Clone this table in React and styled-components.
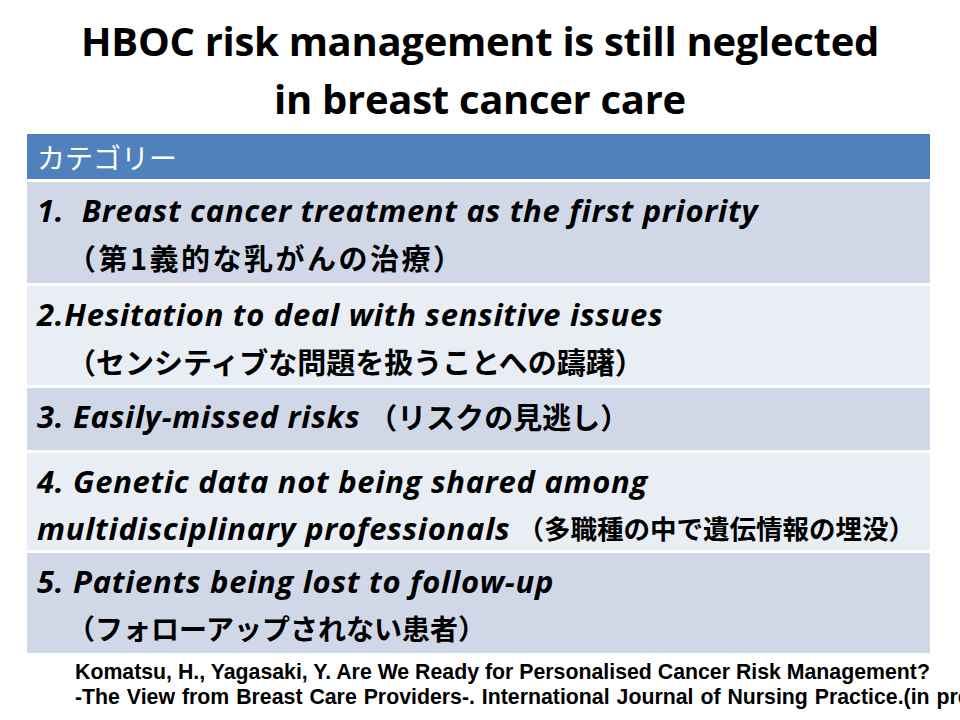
import React from "react";
import styled, { createGlobalStyle } from "styled-components";

const Global = createGlobalStyle`
  html, body { margin: 0; padding: 0; background: #ffffff; }
  body { width: 960px; height: 720px; overflow: hidden; }
`;

const Slide = styled.div`
  width: 960px;
  height: 720px;
  overflow: hidden;
  display: flex;
  flex-direction: column;
  background: #fff;
`;

const Title = styled.h1`
  margin: 0;
  padding-top: 12px;
  height: 121px;
  box-sizing: border-box;
  text-align: center;
  font-family: "Open Sans", "Noto Sans", sans-serif;
  font-weight: 700;
  font-size: 40px;
  line-height: 58px;
  letter-spacing: -0.3px;
  color: #000;
`;

const Table = styled.div`
  margin: 13px 0 0 27px;
  width: 903px;
  display: flex;
  flex-direction: column;
  gap: 3px;
`;

const Header = styled.div`
  height: 45px;
  background: #4f81bd;
  color: #fff;
  display: flex;
  align-items: center;
  padding-left: 10px;
  font-family: "Noto Sans CJK JP", sans-serif;
  font-size: 28px;
`;

const Row = styled.div`
  height: ${(p) => p.$h}px;
  box-sizing: border-box;
  padding: 4px 0 0 10px;
  background: ${(p) => (p.$odd ? "#d0d8e8" : "#e9edf4")};
`;

const Line = styled.div`
  height: 47px;
  display: flex;
  align-items: center;
  white-space: nowrap;
  padding-left: ${(p) => p.$indent || 0}px;
`;

const En = styled.span`
  font-family: "Open Sans", "Noto Sans", sans-serif;
  font-weight: 700;
  font-style: italic;
  font-size: 31px;
  letter-spacing: 0.7px;
  color: #000;
  white-space: pre;
`;

const Jp = styled.span`
  font-family: "Noto Sans CJK JP", sans-serif;
  font-weight: 700;
  font-size: ${(p) => p.$size || 29}px;
  color: #000;
  letter-spacing: ${(p) => p.$ls || 0}px;
  margin-left: ${(p) => p.$ml || 0}px;
`;

const Citation = styled.div`
  margin-top: 7px;
  padding-left: 75px;
  font-family: "Liberation Sans", Arial, sans-serif;
  font-weight: 700;
  font-size: 21.3px;
  line-height: 25px;
  color: #000;
  white-space: nowrap;
`;

const CiteLine = styled.div`
  word-spacing: ${(p) => p.$ws || 0}px;
`;

export default function App() {
  return (
    <>
      <Global />
      <Slide>
        <Title>
          HBOC risk management is still neglected
          <br />
          in breast cancer care
        </Title>
        <Table>
          <Header>カテゴリー</Header>
          <Row $odd $h={101}>
            <Line>
              <En>{"1.  Breast cancer treatment as the first priority"}</En>
            </Line>
            <Line $indent={30}>
              <Jp $ls={2.5}>（第1義的な乳がんの治療）</Jp>
            </Line>
          </Row>
          <Row $h={99}>
            <Line>
              <En>2.Hesitation to deal with sensitive issues</En>
            </Line>
            <Line $indent={30}>
              <Jp>（センシティブな問題を扱うことへの躊躇）</Jp>
            </Line>
          </Row>
          <Row $odd $h={62}>
            <Line>
              <En>3. Easily-missed risks</En>
              <Jp $ml={8}>（リスクの見逃し）</Jp>
            </Line>
          </Row>
          <Row $h={97}>
            <Line>
              <En>4. Genetic data not being shared among</En>
            </Line>
            <Line>
              <En>multidisciplinary professionals</En>
              <Jp $size={26.5} $ml={7}>（多職種の中で遺伝情報の埋没）</Jp>
            </Line>
          </Row>
          <Row $odd $h={100}>
            <Line>
              <En>5. Patients being lost to follow-up</En>
            </Line>
            <Line $indent={30}>
              <Jp $size={28}>（フォローアップされない患者）</Jp>
            </Line>
          </Row>
        </Table>
        <Citation>
          <CiteLine>
            Komatsu, H., Yagasaki, Y. Are We Ready for Personalised Cancer Risk Management?
          </CiteLine>
          <CiteLine $ws={1}>
            -The View from Breast Care Providers-. International Journal of Nursing Practice.(in press)
          </CiteLine>
        </Citation>
      </Slide>
    </>
  );
}
